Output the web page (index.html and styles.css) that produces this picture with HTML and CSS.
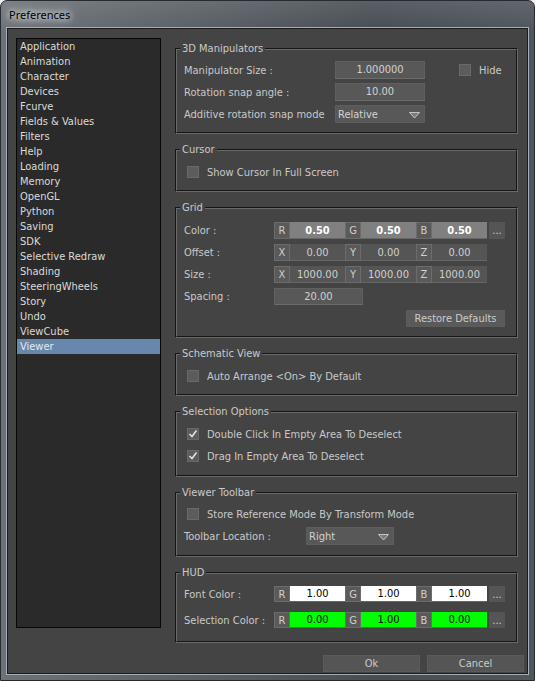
FILE: index.html
```html
<!DOCTYPE html>
<html lang="en">
<head>
    <meta charset="UTF-8">
    <title>Preferences</title>
    <link rel="stylesheet" href="styles.css">
</head>
<body>
    <div class="window">
        <div class="titlebar"><span class="title">Preferences</span></div>
        <div class="client">
            <div class="main">
                <ul class="category-list">
                    <li>Application</li>
                    <li>Animation</li>
                    <li>Character</li>
                    <li>Devices</li>
                    <li>Fcurve</li>
                    <li>Fields &amp; Values</li>
                    <li>Filters</li>
                    <li>Help</li>
                    <li>Loading</li>
                    <li>Memory</li>
                    <li>OpenGL</li>
                    <li>Python</li>
                    <li>Saving</li>
                    <li>SDK</li>
                    <li>Selective Redraw</li>
                    <li>Shading</li>
                    <li>SteeringWheels</li>
                    <li>Story</li>
                    <li>Undo</li>
                    <li>ViewCube</li>
                    <li class="selected">Viewer</li>
                </ul>

                <div class="panels">
                    <fieldset class="group manip">
                        <legend>3D Manipulators</legend>
                        <div class="row">
                            <span class="label">Manipulator Size :</span>
                            <span class="field">1.000000</span>
                            <span class="check hide-check"><span class="box"></span>Hide</span>
                        </div>
                        <div class="row">
                            <span class="label">Rotation snap angle :</span>
                            <span class="field">10.00</span>
                        </div>
                        <div class="row">
                            <span class="label">Additive rotation snap mode</span>
                            <span class="dropdown">Relative
                                <svg class="arrow" width="11" height="7" viewBox="0 0 11 7"><path d="M0.5 0.5 L10.5 0.5 L5.5 6 Z" fill="#7a7a7a" stroke="#c4c4c4" stroke-width="1"/></svg>
                            </span>
                        </div>
                    </fieldset>

                    <fieldset class="group single">
                        <legend>Cursor</legend>
                        <div class="row">
                            <span class="check"><span class="box"></span>Show Cursor In Full Screen</span>
                        </div>
                    </fieldset>

                    <fieldset class="group grid">
                        <legend>Grid</legend>
                        <div class="row">
                            <span class="label">Color :</span>
                            <span class="channels">
                                <span class="ch">R</span><span class="val val-gray">0.50</span>
                                <span class="ch">G</span><span class="val val-gray">0.50</span>
                                <span class="ch">B</span><span class="val val-gray">0.50</span>
                            </span>
                            <span class="more">...</span>
                        </div>
                        <div class="row">
                            <span class="label">Offset :</span>
                            <span class="channels">
                                <span class="ch">X</span><span class="val">0.00</span>
                                <span class="ch">Y</span><span class="val">0.00</span>
                                <span class="ch">Z</span><span class="val">0.00</span>
                            </span>
                        </div>
                        <div class="row">
                            <span class="label">Size :</span>
                            <span class="channels">
                                <span class="ch">X</span><span class="val">1000.00</span>
                                <span class="ch">Y</span><span class="val">1000.00</span>
                                <span class="ch">Z</span><span class="val">1000.00</span>
                            </span>
                        </div>
                        <div class="row">
                            <span class="label">Spacing :</span>
                            <span class="field spacing">20.00</span>
                        </div>
                        <div class="row row-end">
                            <span class="btn restore">Restore Defaults</span>
                        </div>
                    </fieldset>

                    <fieldset class="group single">
                        <legend>Schematic View</legend>
                        <div class="row">
                            <span class="check"><span class="box"></span>Auto Arrange &lt;On&gt; By Default</span>
                        </div>
                    </fieldset>

                    <fieldset class="group selection">
                        <legend>Selection Options</legend>
                        <div class="row">
                            <span class="check"><span class="box"><svg width="10" height="10" viewBox="0 0 10 10"><path d="M1.5 5 L4 7.5 L8.5 1.5" fill="none" stroke="#e2e2e2" stroke-width="1.6"/></svg></span>Double Click In Empty Area To Deselect</span>
                        </div>
                        <div class="row">
                            <span class="check"><span class="box"><svg width="10" height="10" viewBox="0 0 10 10"><path d="M1.5 5 L4 7.5 L8.5 1.5" fill="none" stroke="#e2e2e2" stroke-width="1.6"/></svg></span>Drag In Empty Area To Deselect</span>
                        </div>
                    </fieldset>

                    <fieldset class="group toolbar">
                        <legend>Viewer Toolbar</legend>
                        <div class="row">
                            <span class="check"><span class="box"></span>Store Reference Mode By Transform Mode</span>
                        </div>
                        <div class="row">
                            <span class="label">Toolbar Location :</span>
                            <span class="dropdown">Right
                                <svg class="arrow" width="11" height="7" viewBox="0 0 11 7"><path d="M0.5 0.5 L10.5 0.5 L5.5 6 Z" fill="#7a7a7a" stroke="#c4c4c4" stroke-width="1"/></svg>
                            </span>
                        </div>
                    </fieldset>

                    <fieldset class="group hud">
                        <legend>HUD</legend>
                        <div class="row">
                            <span class="label">Font Color :</span>
                            <span class="channels">
                                <span class="ch">R</span><span class="val val-white">1.00</span>
                                <span class="ch">G</span><span class="val val-white">1.00</span>
                                <span class="ch">B</span><span class="val val-white">1.00</span>
                            </span>
                            <span class="more">...</span>
                        </div>
                        <div class="row">
                            <span class="label">Selection Color :</span>
                            <span class="channels">
                                <span class="ch">R</span><span class="val val-green">0.00</span>
                                <span class="ch">G</span><span class="val val-green">1.00</span>
                                <span class="ch">B</span><span class="val val-green">0.00</span>
                            </span>
                            <span class="more">...</span>
                        </div>
                    </fieldset>
                </div>
            </div>

            <div class="footer">
                <span class="btn">Ok</span>
                <span class="btn">Cancel</span>
            </div>
        </div>
    </div>
</body>
</html>
```

FILE: styles.css
```css
* {
    margin: 0;
    padding: 0;
    box-sizing: border-box;
}

body {
    width: 535px;
    height: 681px;
    overflow: hidden;
    background: #eef0f2;
    font-family: "DejaVu Sans Condensed", "DejaVu Sans", sans-serif;
    font-stretch: condensed;
    font-size: 11px;
    color: #c9c9c9;
}

/* window frame */
.window {
    width: 535px;
    height: 681px;
    display: flex;
    flex-direction: column;
    border: 1px solid #262b30;
    border-radius: 7px 7px 0 0;
    background:
        linear-gradient(180deg, rgba(255, 255, 255, 0.10), rgba(255, 255, 255, 0) 30px),
        linear-gradient(90deg, #6c7278 0%, #596066 35%, #474d54 70%, #4f565d 100%);
}
.titlebar {
    height: 27px;
    display: flex;
    align-items: center;
    padding-left: 8px;
}
.title {
    font-family: "Noto Sans", "Open Sans", sans-serif;
    font-stretch: normal;
    font-size: 11px;
    color: #000;
    text-shadow: 0 0 6px #fff, 0 0 10px rgba(255, 255, 255, 0.8), 0 0 14px rgba(255, 255, 255, 0.5);
}

.client {
    flex: 1;
    margin: 0 6px 6px;
    background: #444;
    border: 1px solid #1b1b1b;
    box-shadow: 0 0 0 1px #a3afba;
    display: flex;
    flex-direction: column;
    padding: 9px 0 1px 8px;
}
.main {
    display: flex;
    align-items: flex-start;
    gap: 14px;
    padding-right: 9px;
}

/* left category list */
.category-list {
    list-style: none;
    width: 145px;
    height: 590px;
    background: #2a2a2a;
    border: 1px solid #080808;
    color: #dadada;
}
.category-list li {
    height: 15px;
    line-height: 14px;
    padding: 1px 0 0 3px;
    white-space: nowrap;
}
.category-list li.selected {
    background: #6787ad;
    color: #e4e9ef;
}

/* right side groups */
.panels {
    flex: 1;
    display: flex;
    flex-direction: column;
    gap: 9px;
    padding-top: 4px;
}
.group {
    border: 2px groove #6a6a6a;
    padding: 6px 0 9px 7px;
}
.group legend {
    margin-left: -4px;
    padding: 0 2px;
    line-height: 13px;
    color: #cacaca;
}
.single {
    padding-top: 7px;
}
.grid {
    padding-top: 8px;
}
.selection {
    padding-top: 7px;
    padding-bottom: 10px;
}
.toolbar {
    padding-bottom: 10px;
}
.hud {
    padding-top: 7px;
    padding-bottom: 13px;
}

.row {
    display: flex;
    align-items: center;
    height: 18px;
}
.row + .row {
    margin-top: 4px;
}
.grid .row {
    height: 17px;
}
.grid .row + .row {
    margin-top: 5px;
}
.hud .row {
    height: 16px;
}
.hud .row + .row {
    margin-top: 10px;
}
.row-end {
    justify-content: flex-end;
    padding-right: 11px;
}

.label {
    white-space: nowrap;
}
.manip .label {
    width: 151px;
}
.grid .label, .hud .label {
    width: 90px;
}
.toolbar .label {
    width: 122px;
}

.field {
    width: 90px;
    height: 18px;
    line-height: 16px;
    text-align: center;
    background: #585858;
    border: 1px solid #606060;
    border-bottom-color: #6c6c6c;
    color: #d2d2d2;
}
.field.spacing {
    width: 89px;
    height: 17px;
    line-height: 15px;
}

.dropdown {
    width: 90px;
    height: 18px;
    display: flex;
    align-items: center;
    justify-content: space-between;
    padding: 0 4px 0 2px;
    background: #585858;
    border: 1px solid #5d5d5d;
    color: #d2d2d2;
}
.toolbar .dropdown {
    width: 88px;
}
.arrow {
    margin-top: 3px;
}

/* checkboxes */
.check {
    display: flex;
    align-items: center;
    white-space: nowrap;
}
.box {
    width: 12px;
    height: 12px;
    margin: 0 8px 0 3px;
    background: #5c5c5c;
    border: 1px solid #696969;
    display: flex;
    align-items: center;
    justify-content: center;
}
.hide-check {
    margin-left: 31px;
}

/* channel fields */
.channels {
    display: flex;
    height: 100%;
}
.ch {
    width: 16px;
    height: 100%;
    display: flex;
    align-items: center;
    justify-content: center;
    background: #5a5a5a;
    border: 1px solid #6c6c6c;
    color: #cfcfcf;
}
.val {
    width: 55px;
    height: 100%;
    display: flex;
    align-items: center;
    justify-content: center;
    background: #555;
    border-bottom: 1px solid #666;
    color: #d0d0d0;
}
.val-gray {
    background: #808080;
    color: #fff;
    font-weight: bold;
}
.val-white {
    background: #fff;
    color: #000;
}
.val-green {
    background: #00ff00;
    color: #000;
}
.more {
    width: 16px;
    height: 100%;
    margin-left: 2px;
    display: flex;
    align-items: center;
    justify-content: center;
    background: #555;
    color: #cfcfcf;
}

/* buttons */
.btn {
    width: 97px;
    height: 17px;
    line-height: 15px;
    text-align: center;
    background: #555;
    border: 1px solid #5b5b5b;
    color: #cbcbcb;
}
.btn.restore {
    width: 99px;
    height: 17px;
    background: #5a5a5a;
}
.footer {
    display: flex;
    justify-content: flex-end;
    gap: 7px;
    margin-top: 12px;
    padding-right: 3px;
}
```
